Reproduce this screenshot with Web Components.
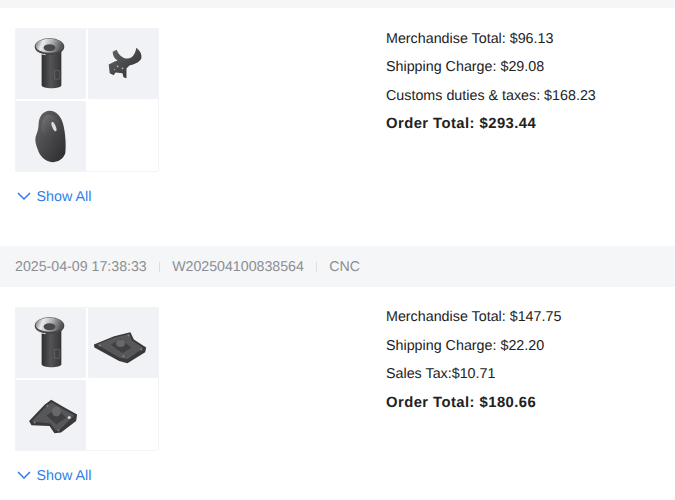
<!DOCTYPE html>
<html>
<head>
<meta charset="utf-8">
<style>
  html, body { margin: 0; height: 500px; overflow: hidden; background: #fff; font-family: "Liberation Sans", Arial, sans-serif; text-rendering: geometricPrecision; }
  .top-strip { height: 8px; background: #f5f6f8; }
  .total { font-weight: 700; font-size: 14.800px; letter-spacing: .45px; }
</style>
</head>
<body>
<div class="top-strip"></div>

<order-row style="--lines-top: 2.9px">
  <part-thumb slot="parts" kind="pin"></part-thumb>
  <part-thumb slot="parts" kind="clip"></part-thumb>
  <part-thumb slot="parts" kind="knob"></part-thumb>
  <part-thumb slot="parts"></part-thumb>
  <div>Merchandise Total: $96.13</div>
  <div>Shipping Charge: $29.08</div>
  <div>Customs duties &amp; taxes: $168.23</div>
  <div class="total">Order Total: $293.44</div>
</order-row>

<order-header date="2025-04-09 17:38:33" number="W202504100838564" process="CNC"></order-header>

<order-row>
  <part-thumb slot="parts" kind="pin"></part-thumb>
  <part-thumb slot="parts" kind="plate"></part-thumb>
  <part-thumb slot="parts" kind="bracket"></part-thumb>
  <part-thumb slot="parts"></part-thumb>
  <div>Merchandise Total: $147.75</div>
  <div>Shipping Charge: $22.20</div>
  <div>Sales Tax:$10.71</div>
  <div class="total">Order Total: $180.66</div>
</order-row>

<script>
const DEFS = `
  <defs>
    <linearGradient id="body" x1="0" x2="1" y1="0" y2="0">
      <stop offset="0" stop-color="#2e2e30"/><stop offset=".45" stop-color="#545457"/><stop offset="1" stop-color="#353537"/>
    </linearGradient>
    <linearGradient id="rim" x1="0" x2="1" y1="0" y2="0.2">
      <stop offset="0" stop-color="#66666a"/><stop offset=".3" stop-color="#ececec"/><stop offset=".6" stop-color="#b4b4b6"/><stop offset="1" stop-color="#55555a"/>
    </linearGradient>
    <linearGradient id="solid" x1="0" x2="1" y1="0" y2="1">
      <stop offset="0" stop-color="#666669"/><stop offset=".55" stop-color="#464649"/><stop offset="1" stop-color="#2a2a2c"/>
    </linearGradient>
    <linearGradient id="face" x1="0" x2="1" y1="0" y2="1">
      <stop offset="0" stop-color="#77777a"/><stop offset=".5" stop-color="#525256"/><stop offset="1" stop-color="#3a3a3d"/>
    </linearGradient>
  </defs>`;

const PARTS = {
  pin: `
    <path d="M27 20V58C27 62 47 62 47 58V20Z" fill="url(#body)"/>
    <path d="M40 43H45V52H40Z" fill="none" stroke="#6e6e71" stroke-width=".6"/>
    <ellipse cx="35" cy="19" rx="15" ry="8.500" fill="#464648"/>
    <ellipse cx="35" cy="18" rx="14" ry="7.200" fill="url(#rim)"/>
    <ellipse cx="35" cy="20" rx="6" ry="3.500" fill="#4a4a4c"/>
    <path d="M22 24C25 26 28 27 31 27" fill="none" stroke="#dedede" stroke-width="1"/>`,
  clip: `
    <path d="M25 24L29 22C31 27 35 31 40 31C45 31 48 26 49 20C53 23 55 27 54 31C52 35 47 37 42 38L39 41L39 51L36 50L35 46L28 45L26 48L22 46L21 37L27 34L30 33C27 31 25 28 25 24Z" fill="url(#solid)"/>
    <circle cx="30" cy="39" r=".9" fill="#b4b4b6"/><circle cx="35" cy="41" r=".9" fill="#b4b4b6"/><circle cx="27" cy="42" r=".7" fill="#a2a2a4"/>`,
  knob: `
    <path d="M35 10C42 10 47 16 49 24C51 32 52 44 51 53C49 59 43 62 38 62C31 62 25 56 23 49C21 44 20 40 21 36C23 31 24 27 24 22C25 15 29 10 35 10Z" fill="url(#solid)"/>
    <path d="M31 15C35 12 41 15 44 21C47 28 46 37 42 40C36 41 30 37 27 31C26 25 28 18 31 15Z" fill="url(#face)"/>
    <ellipse cx="39.500" cy="26" rx="1.800" ry="5" transform="rotate(-22 39.500 26)" fill="#dcdcde"/>`,
  plate: `
    <path d="M6 38L26.500 29.700L43 25.700L46.500 33L59 41L58 46L40 57L31.500 54.700L6.500 41Z" fill="#39393b"/>
    <path d="M9 38L27 31L42 27.500L44.500 34L56 41.500L40 53L32 51.500Z" fill="#57575a"/>
    <path d="M23 38L33 33L44 41L35 47Z" fill="#404043"/>
    <ellipse cx="33" cy="37" rx="4.500" ry="3.500" fill="#68686b"/>
    <circle cx="12" cy="39" r="1" fill="#88888b"/><circle cx="41" cy="29" r="1" fill="#88888b"/><circle cx="54" cy="43" r="1" fill="#88888b"/><circle cx="36" cy="50" r="1" fill="#88888b"/>`,
  bracket: `
    <path d="M14.300 41.700L30 25L36.700 20L48 26.700L63 35L62 41.700L46.700 53.300L40 54L35 46.700L16.700 46Z" fill="#39393b"/>
    <path d="M17 42L31 27L37 22.500L47 28.500L60 36L46 50L41 51L36 44Z" fill="#57575a"/>
    <path d="M32 36L42 29L52 38L42 45Z" fill="#404043"/>
    <ellipse cx="42" cy="32" rx="4.500" ry="5" fill="#68686b"/>
    <circle cx="33" cy="26" r="1" fill="#88888b"/><circle cx="20" cy="43" r="1" fill="#88888b"/><circle cx="44" cy="51" r="1" fill="#88888b"/><circle cx="55" cy="38" r="1.600" fill="#d4d4d6"/>`
};

class PartThumb extends HTMLElement {
  connectedCallback() {
    const kind = this.getAttribute("kind");
    this.attachShadow({ mode: "open" });
    this.shadowRoot.innerHTML = `
      <style>
        :host { display: block; height: 71px; border-radius: 2px; background: ${kind ? "#f0f2f6" : "#fff"}; }
        svg { display: block; width: 100%; height: 100%; filter: blur(.3px); }
      </style>
      ${kind ? `<svg viewBox="0 0 72 72">${DEFS}${PARTS[kind]}</svg>` : ""}`;
  }
}
customElements.define("part-thumb", PartThumb);

class OrderRow extends HTMLElement {
  constructor() {
    super();
    this.attachShadow({ mode: "open" });
    this.shadowRoot.innerHTML = `
      <style>
        :host { display: flex; box-sizing: border-box; height: 238px; padding: 20px 15px 0; color: #222; font-size: 14.300px; }
        .left { width: 371px; flex: none; }
        .grid { width: 144px; display: grid; grid-template-columns: 1fr 1fr; gap: 2px; border-radius: 3px; outline: 1px solid #f1f3f7; outline-offset: -1px; }
        .more { display: flex; align-items: center; gap: 5.500px; margin-top: 16px; height: 18px; color: #2f7fe8; }
        .more svg { width: 14px; height: 8px; margin: 0 0 2px 2px; }
        .lines { display: flex; flex-direction: column; gap: 12px; padding-top: var(--lines-top, 2.400px); line-height: 16.500px; }
      </style>
      <div class="left">
        <div class="grid"><slot name="parts"></slot></div>
        <div class="more">
          <svg viewBox="0 0 14 8"><path d="M1 1L7 7L13 1" fill="none" stroke="#2f7fe8" stroke-width="1.500"/></svg>
          <span>Show All</span>
        </div>
      </div>
      <div class="lines"><slot></slot></div>`;
  }
}
customElements.define("order-row", OrderRow);

class OrderHeader extends HTMLElement {
  connectedCallback() {
    this.attachShadow({ mode: "open" });
    this.shadowRoot.innerHTML = `
      <style>
        :host { display: flex; align-items: center; box-sizing: border-box; height: 41px; padding: 0 15px; background: #f5f6f8; color: #8c8e93; font-size: 14.200px; }
        i { width: 1px; height: 10px; margin: 0 12.200px; background: #dcdee2; }
      </style>
      <span>${this.getAttribute("date")}</span><i></i>
      <span>${this.getAttribute("number")}</span><i></i>
      <span>${this.getAttribute("process")}</span>`;
  }
}
customElements.define("order-header", OrderHeader);
</script>
</body>
</html>
